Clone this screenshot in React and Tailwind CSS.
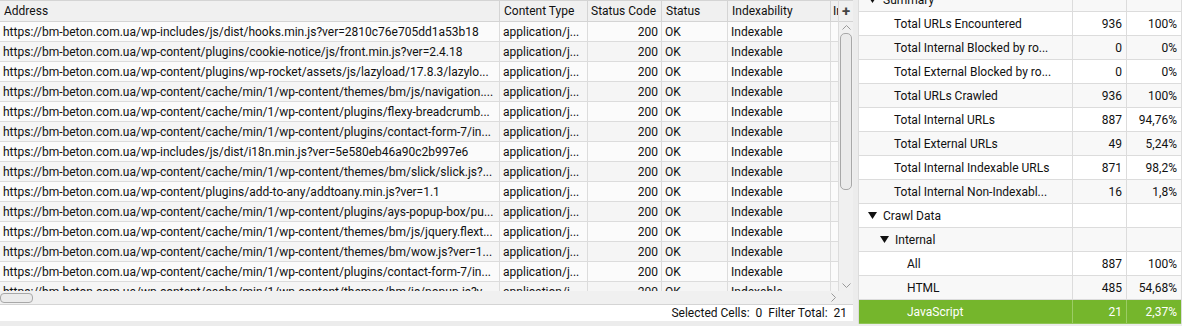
import React from "react";

const rows = [
  "https://bm-beton.com.ua/wp-includes/js/dist/hooks.min.js?ver=2810c76e705dd1a53b18",
  "https://bm-beton.com.ua/wp-content/plugins/cookie-notice/js/front.min.js?ver=2.4.18",
  "https://bm-beton.com.ua/wp-content/plugins/wp-rocket/assets/js/lazyload/17.8.3/lazylo...",
  "https://bm-beton.com.ua/wp-content/cache/min/1/wp-content/themes/bm/js/navigation....",
  "https://bm-beton.com.ua/wp-content/cache/min/1/wp-content/plugins/flexy-breadcrumb...",
  "https://bm-beton.com.ua/wp-content/cache/min/1/wp-content/plugins/contact-form-7/in...",
  "https://bm-beton.com.ua/wp-includes/js/dist/i18n.min.js?ver=5e580eb46a90c2b997e6",
  "https://bm-beton.com.ua/wp-content/cache/min/1/wp-content/themes/bm/slick/slick.js?...",
  "https://bm-beton.com.ua/wp-content/plugins/add-to-any/addtoany.min.js?ver=1.1",
  "https://bm-beton.com.ua/wp-content/cache/min/1/wp-content/plugins/ays-popup-box/pu...",
  "https://bm-beton.com.ua/wp-content/cache/min/1/wp-content/themes/bm/js/jquery.flext...",
  "https://bm-beton.com.ua/wp-content/cache/min/1/wp-content/themes/bm/wow.js?ver=1...",
  "https://bm-beton.com.ua/wp-content/cache/min/1/wp-content/plugins/contact-form-7/in...",
  "https://bm-beton.com.ua/wp-content/cache/min/1/wp-content/themes/bm/js/popup.js?v...",
];

const overview = [
  { label: "Summary", level: 0, open: true },
  { label: "Total URLs Encountered", level: 1, n: "936", p: "100%" },
  { label: "Total Internal Blocked by ro...", level: 1, n: "0", p: "0%" },
  { label: "Total External Blocked by ro...", level: 1, n: "0", p: "0%" },
  { label: "Total URLs Crawled", level: 1, n: "936", p: "100%" },
  { label: "Total Internal URLs", level: 1, n: "887", p: "94,76%" },
  { label: "Total External URLs", level: 1, n: "49", p: "5,24%" },
  { label: "Total Internal Indexable URLs", level: 1, n: "871", p: "98,2%" },
  { label: "Total Internal Non-Indexabl...", level: 1, n: "16", p: "1,8%" },
  { label: "Crawl Data", level: 0, open: true },
  { label: "Internal", level: 1, open: true },
  { label: "All", level: 2, n: "887", p: "100%" },
  { label: "HTML", level: 2, n: "485", p: "54,68%" },
  { label: "JavaScript", level: 2, n: "21", p: "2,37%", selected: true },
];

const font = { fontFamily: "Roboto, 'Liberation Sans', sans-serif" };

function Tri() {
  return (
    <svg width="9" height="7" viewBox="0 0 9 7" className="shrink-0">
      <path d="M0 0 H9 L4.5 7 Z" fill="#111" />
    </svg>
  );
}

export default function App() {
  return (
    <div className="w-[1182px] h-[326px] flex bg-[#ececec] overflow-hidden text-[12px] text-[#111]" style={font}>
      {/* Left: table */}
      <div className="w-[853px] h-full flex flex-col">
        <div className="h-[291px] flex">
          <div className="w-[838px] flex flex-col overflow-hidden bg-white">
            <div className="h-[22px] shrink-0 flex bg-[#f0f0f0] border-t border-b border-[#d4d4d4] whitespace-nowrap">
              <div className="w-[500px] shrink-0 px-[4px] flex items-center border-r border-[#d4d4d4]">Address</div>
              <div className="w-[88px] shrink-0 px-[4px] flex items-center border-r border-[#d4d4d4]">Content Type</div>
              <div className="w-[74px] shrink-0 px-[3px] flex items-center border-r border-[#d4d4d4]">Status Code</div>
              <div className="w-[66px] shrink-0 px-[4px] flex items-center border-r border-[#d4d4d4]">Status</div>
              <div className="w-[103px] shrink-0 px-[4px] flex items-center border-r border-[#d4d4d4]">Indexability</div>
              <div className="flex-1 pl-[2px] flex items-center overflow-hidden">In</div>
            </div>
            {rows.map((u, i) => (
              <div key={i} className={`h-[20px] shrink-0 flex border-b border-[#dcdcdc] whitespace-nowrap ${i % 2 ? "bg-[#f5f5f5]" : "bg-[#fbfbfb]"}`}>
                <div className="w-[500px] shrink-0 px-[3px] flex items-center border-r border-[#dcdcdc] overflow-hidden">{u}</div>
                <div className="w-[88px] shrink-0 px-[3px] flex items-center border-r border-[#dcdcdc]">application/j...</div>
                <div className="w-[74px] shrink-0 px-[3px] flex items-center justify-end border-r border-[#dcdcdc]">200</div>
                <div className="w-[66px] shrink-0 px-[3px] flex items-center border-r border-[#dcdcdc]">OK</div>
                <div className="w-[103px] shrink-0 px-[3px] flex items-center border-r border-[#dcdcdc]">Indexable</div>
                <div className="flex-1" />
              </div>
            ))}
          </div>
          {/* vertical scrollbar */}
          <div className="w-[15px] flex flex-col bg-[#f0f0f0] border-l border-[#dcdcdc]">
            <div className="h-[22px] shrink-0 flex items-center justify-center border-t border-b border-[#d4d4d4] text-[15px] font-bold text-[#444] leading-none">+</div>
            <div className="h-[10px] flex items-center justify-center">
              <svg width="9" height="5" viewBox="0 0 9 5"><path d="M0.5 4.5 L4.5 0.5 L8.5 4.5" fill="none" stroke="#999" /></svg>
            </div>
            <div className="mx-[1px] mt-[1px] h-[157px] rounded-[5px] border border-[#a8a8a8] bg-[#ebebeb]" />
            <div className="flex-1" />
            <div className="h-[12px] flex items-center justify-center">
              <svg width="9" height="5" viewBox="0 0 9 5"><path d="M0.5 0.5 L4.5 4.5 L8.5 0.5" fill="none" stroke="#999" /></svg>
            </div>
          </div>
        </div>
        {/* horizontal scrollbar */}
        <div className="h-[14px] flex bg-[#f0f0f0] border-b border-[#d4d4d4]">
          <div className="w-[838px] flex items-center">
            <div className="w-[33px] h-[10px] rounded-[4px] border border-[#a8a8a8] bg-[#ebebeb]" />
            <div className="flex-1" />
            <svg width="5" height="9" viewBox="0 0 5 9" className="mr-[2px]"><path d="M0.5 0.5 L4.5 4.5 L0.5 8.5" fill="none" stroke="#999" /></svg>
          </div>
          <div className="flex-1" />
        </div>
        {/* status bar */}
        <div className="h-[16px] bg-white flex items-center justify-end pr-[6px] whitespace-pre">
          {"Selected Cells:  0  Filter Total:  21"}
        </div>
        <div className="flex-1" />
      </div>

      {/* splitter */}
      <div className="w-[5px] h-full" />

      {/* Right: overview */}
      <div className="flex-1 h-full flex flex-col">
        <div className="mt-[-12px] flex flex-col border-l border-r border-[#dcdcdc]">
          {overview.map((r, i) => (
            <div
              key={i}
              className={`h-[24px] flex border-b whitespace-nowrap ${r.selected ? "bg-[#75b62c] text-white border-[#8fc555]" : i % 2 ? "bg-white border-[#dcdcdc]" : "bg-[#f8f8f8] border-[#dcdcdc]"}`}
            >
              <div className={`w-[214px] shrink-0 flex items-center gap-[6px] border-r ${r.selected ? "border-[#9ccc66]" : "border-[#dcdcdc]"} ${r.open ? (r.level === 0 ? "pl-[9px]" : "pl-[21px]") : r.level === 1 ? "pl-[35px]" : "pl-[48px]"}`}>
                {r.open && <Tri />}
                <span>{r.label}</span>
              </div>
              <div className={`w-[54px] shrink-0 flex items-center justify-end pr-[4px] border-r ${r.selected ? "border-[#9ccc66]" : "border-[#dcdcdc]"}`}>{r.n}</div>
              <div className="flex-1 flex items-center justify-end pr-[4px]">{r.p}</div>
            </div>
          ))}
        </div>
        <div className="flex-1" />
      </div>
    </div>
  );
}
